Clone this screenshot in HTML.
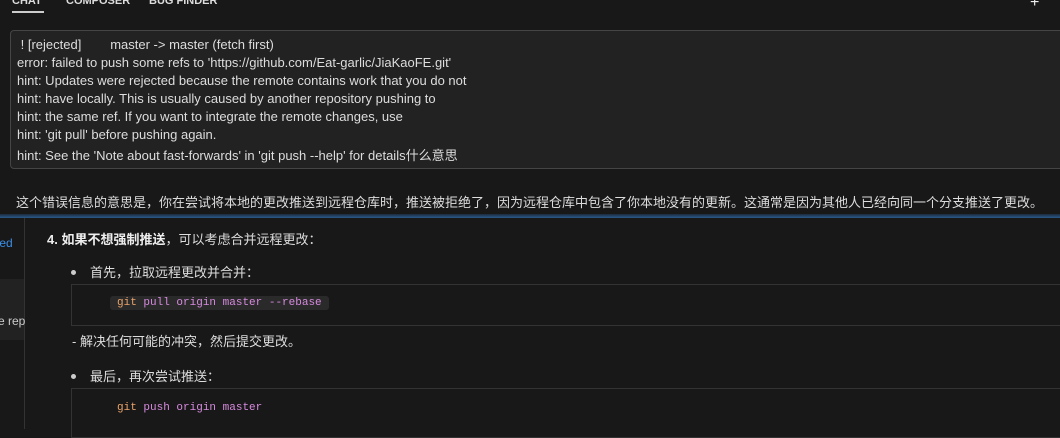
<!DOCTYPE html>
<html><head><meta charset="utf-8"><style>
*{margin:0;padding:0;box-sizing:border-box}
body{width:1060px;height:429px;overflow:hidden;background:#181818;color:#ccc;font-family:"Liberation Sans","Noto Sans CJK SC",sans-serif;position:relative}
.a{position:absolute;white-space:nowrap}
.tab{font-size:11px;font-weight:bold;color:#ddd;top:-5px}
.box{position:absolute;left:10px;top:30px;width:1060px;height:139px;background:#222;border:1px solid #454545;border-radius:4px}
.box div{position:absolute;left:6px;font-size:13px;color:#ddd}
.cn{font-size:13px;color:#ddd}
.code{position:absolute;left:71px;width:1000px;border:1px solid #333;background:#181818}
.mono{font-family:"Liberation Mono",monospace;font-size:11px}
.k{color:#e8a36a}.p{color:#d78adf}
</style></head><body>
<div class="a tab" style="left:12px">CHAT</div>
<div style="position:absolute;left:12px;top:11px;width:32px;height:2px;background:#ccc"></div>
<div class="a tab" style="left:66px">COMPOSER</div>
<div class="a tab" style="left:149px">BUG FINDER</div>
<div class="a" style="left:1030px;top:-6px;color:#eee;font-size:16px">+</div>
<div class="box">
<div style="top:6px">&nbsp;! [rejected]&nbsp;&nbsp;&nbsp;&nbsp;&nbsp;&nbsp;&nbsp; master -&gt; master (fetch first)</div>
<div style="top:24px">error: failed to push some refs to 'https://github.com/Eat-garlic/JiaKaoFE.git'</div>
<div style="top:42px">hint: Updates were rejected because the remote contains work that you do not</div>
<div style="top:60px">hint: have locally. This is usually caused by another repository pushing to</div>
<div style="top:78px">hint: the same ref. If you want to integrate the remote changes, use</div>
<div style="top:96px">hint: 'git pull' before pushing again.</div>
<div style="top:114px">hint: See the 'Note about fast-forwards' in 'git push --help' for details什么意思</div>
</div>
<div class="a cn" style="left:16px;top:192px">这个错误信息的意思是，你在尝试将本地的更改推送到远程仓库时，推送被拒绝了，因为远程仓库中包含了你本地没有的更新。这通常是因为其他人已经向同一个分支推送了更改。</div>
<div style="position:absolute;left:0;top:214px;width:1060px;height:4px;background:linear-gradient(#1b2a3c,#2a5a8c)"></div>
<div style="position:absolute;left:24px;top:218px;width:1px;height:211px;background:#333"></div>
<div style="position:absolute;left:0;top:279px;width:24px;height:61px;background:#222"></div>
<div class="a" style="left:-4px;top:236px;font-size:12px;color:#3a8ee6">ted</div>
<div class="a" style="left:-2px;top:314px;font-size:12px;color:#ccc">e rep</div>
<div class="a cn" style="left:47px;top:229px"><b style="color:#eee">4. 如果不想强制推送</b>，可以考虑合并远程更改：</div>
<div class="a" style="left:71px;top:270px;width:5px;height:5px;border-radius:50%;background:#ccc"></div>
<div class="a cn" style="left:90px;top:262px">首先，拉取远程更改并合并：</div>
<div class="code" style="top:284px;height:42px"><div class="a mono" style="left:38px;top:11px;background:#2a2a2a;padding:1px 7px 1px 7px;border-radius:3px"><span class="k">git</span> <span class="p">pull origin master --rebase</span></div></div>
<div class="a cn" style="left:72px;top:331px">- 解决任何可能的冲突，然后提交更改。</div>
<div class="a" style="left:71px;top:374px;width:5px;height:5px;border-radius:50%;background:#ccc"></div>
<div class="a cn" style="left:90px;top:366px">最后，再次尝试推送：</div>
<div class="code" style="top:388px;height:50px"><div class="a mono" style="left:45px;top:13px"><span class="k">git</span> <span class="p">push origin master</span></div></div>
</body></html>
